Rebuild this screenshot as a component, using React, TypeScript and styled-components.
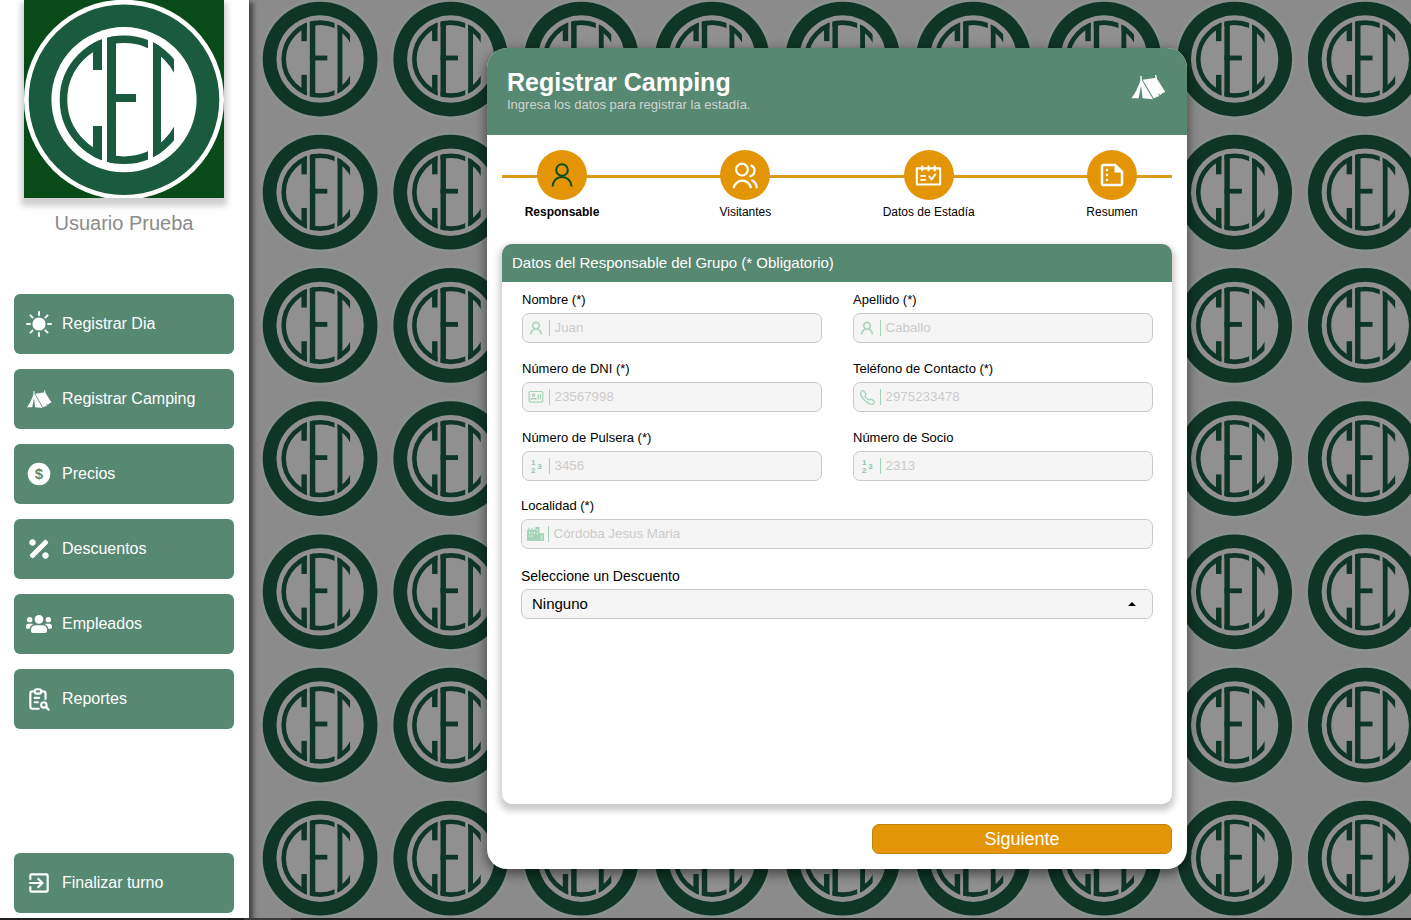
import React from "react";
import styled, { createGlobalStyle, css } from "styled-components";
import { AiOutlineSchedule, AiOutlineUser } from "react-icons/ai";
import { FaPercentage } from "react-icons/fa";
import { TbReportSearch } from "react-icons/tb";
import { MdExitToApp, MdOutlineSummarize } from "react-icons/md";
import { BsTelephone } from "react-icons/bs";

const green = "#578872";
const orange = "#e39506";

const GlobalStyle = createGlobalStyle`
  * { box-sizing: border-box; }
  body {
    margin: 0;
    overflow: hidden;
    background: #1f1f20;
    font-family: "Liberation Sans", Arial, sans-serif;
  }
`;

const Page = styled.div`
  display: flex;
  width: 1411px;
  height: 918px;
  position: relative;
  overflow: hidden;
  background: #8b8b8b;
`;

const BottomEdge = styled.div`
  height: 2px;
  background: linear-gradient(#3b3b3c, #3b3b3c) 244px 0 / 47px 2px no-repeat #1f1f20;
`;

const Backdrop = styled.svg`
  position: absolute;
  inset: 0;
  width: 100%;
  height: 100%;
`;

const Sidebar = styled.aside`
  position: relative;
  width: 249px;
  height: 100%;
  flex: none;
  display: flex;
  flex-direction: column;
  align-items: center;
  padding-bottom: 5px;
  background: #fff;
  box-shadow: 3px 3px 5px 1px rgba(0, 0, 0, 0.55);
`;

const LogoFrame = styled.div`
  width: 200px;
  height: 198px;
  margin-right: 1px;
  background: #084b18;
  box-shadow: 0 5px 6px 3px rgba(0, 0, 0, 0.19);
  svg { display: block; }
`;

const UserName = styled.div`
  margin: 14px 1px 0 0;
  height: 82px;
  font-size: 20px;
  line-height: 23px;
  color: #8b8b8b;
`;

const Menu = styled.nav`
  display: flex;
  flex-direction: column;
  gap: 15px;
  margin-right: 1px;
  flex: 1;
`;

const MenuButton = styled.button<{ $last?: boolean }>`
  display: flex;
  align-items: center;
  gap: 10px;
  width: 220px;
  height: 60px;
  padding: 0 12px;
  border: 0;
  border-radius: 6px;
  background: ${green};
  color: #fff;
  font: 16px/18px "Liberation Sans", Arial, sans-serif;
  text-align: left;
  margin-top: ${(p) => (p.$last ? "auto" : "0")};
  svg { width: 26px; height: 26px; flex: none; }
`;

const Main = styled.main`
  position: relative;
  flex: 1;
  display: flex;
  justify-content: center;
  align-items: flex-start;
  padding: 48px 0 0 14px;
`;

const Panel = styled.section`
  width: 700px;
  height: 821px;
  border-radius: 20px;
  background: #fff;
  box-shadow: 0 4px 12px 1px rgba(0, 0, 0, 0.5);
`;

const PanelHeader = styled.header`
  display: flex;
  justify-content: space-between;
  height: 87px;
  padding: 20px 20px 0;
  border-radius: 20px 20px 0 0;
  background: ${green};
  color: #fff;
  svg { width: 36px; height: 28px; margin: 5px 1px 0 0; }
`;

const Title = styled.h1`
  margin: 0;
  font-size: 25px;
  line-height: 29px;
`;

const Subtitle = styled.p`
  margin: 0;
  font-size: 13px;
  line-height: 15px;
  color: #d0d3d1;
`;

const Steps = styled.ol`
  list-style: none;
  margin: 15px 15px 0;
  padding: 0;
  height: 94px;
  display: flex;
  justify-content: space-between;
  background: linear-gradient(#dc991c, #dc991c) 0 25px / 100% 3px no-repeat;
`;

const Step = styled.li<{ $active?: boolean }>`
  display: flex;
  flex-direction: column;
  align-items: center;
  gap: 5px;
  width: 120px;
  font-size: 12px;
  line-height: 14px;
  font-weight: ${(p) => (p.$active ? 700 : 400)};
  color: #000;
`;

const StepDot = styled.span<{ $active?: boolean }>`
  display: flex;
  align-items: center;
  justify-content: center;
  width: 50px;
  height: 50px;
  border-radius: 50%;
  background: ${orange};
  color: ${(p) => (p.$active ? "#084b18" : "#fff")};
`;

const Card = styled.section`
  height: 560px;
  margin: 0 15px;
  border-radius: 10px;
  background: #fff;
  box-shadow: 0 4px 6px 3px rgba(0, 0, 0, 0.2);
`;

const CardHeader = styled.h2`
  margin: 0;
  height: 38px;
  padding: 0 10px;
  border-radius: 10px 10px 0 0;
  background: ${green};
  color: #fff;
  font-size: 15px;
  font-weight: 400;
  line-height: 38px;
`;

const FieldGrid = styled.div`
  display: grid;
  grid-template-columns: 300px 300px;
  column-gap: 31px;
  row-gap: 18px;
  padding: 10px 20px 0;
`;

const WideField = styled.div<{ $top: number }>`
  padding: ${(p) => p.$top}px 19px 0;
`;

const Label = styled.label<{ $large?: boolean }>`
  display: block;
  height: 21px;
  font-size: ${(p) => (p.$large ? 14 : 13)}px;
  line-height: 16px;
  color: #000;
`;

const box = css`
  display: flex;
  align-items: center;
  height: 30px;
  border: 1px solid #c9c9c9;
  border-radius: 7px;
  background: #f5f5f5;
`;

const InputBox = styled.div`
  ${box}
  padding-left: 4px;
`;

const IconSlot = styled.span`
  display: flex;
  align-items: center;
  justify-content: center;
  width: 18px;
  height: 18px;
  color: #a5d3b8;
`;

const Divider = styled.span`
  width: 1px;
  height: 16px;
  margin: 0 4px;
  background: #a5d3b8;
`;

const Placeholder = styled.span`
  font-size: 13.333px;
  line-height: 15px;
  margin-top: -2px;
  padding-left: 0.5px;
  color: #cbcbcb;
`;

const SelectBox = styled.div`
  ${box}
  justify-content: space-between;
  padding: 0 16px 1px 10px;
  font-size: 15px;
  color: #000;
`;

const Actions = styled.div`
  display: flex;
  justify-content: flex-end;
  padding: 20px 15px 0;
`;

const NextButton = styled.button`
  width: 300px;
  height: 30px;
  padding: 0;
  border: 1px solid #c28212;
  border-radius: 7px;
  background: ${orange};
  color: #fff;
  font: 18px/26px "Liberation Sans", Arial, sans-serif;
`;

const Glyph = styled.text<{ $size: number }>`
  font: 700 ${(p) => p.$size}px "Liberation Sans", Arial, sans-serif;
  text-anchor: middle;
`;

function SunIcon() {
  return (
    <svg viewBox="0 0 26 26">
      <circle cx="13" cy="13" r="6.6" fill="currentColor" />
      <g stroke="currentColor" strokeWidth="1.9">
        {[0, 45, 90, 135, 180, 225, 270, 315].map((a) => (
          <path key={a} d="M13 .2v4.5" transform={`rotate(${a} 13 13)`} />
        ))}
      </g>
    </svg>
  );
}

function TentIcon() {
  return (
    <svg viewBox="0 0 108 84" fill="currentColor">
      <path d="M31 9h4v12h-4zM75 6h4l2 12h-4z" />
      <path d="M33 17 C26 40 16 60 4 76h22l7-38 5 38 31 3z" />
      <path d="M38 20 79 14 106 57l-8 3-7 6-7-6 4 9-17 7z" />
    </svg>
  );
}

function DollarIcon() {
  return (
    <svg viewBox="0 0 26 26">
      <circle cx="13" cy="13" r="11.3" fill="currentColor" />
      <Glyph $size={15} x="13" y="18.1" fill={green}>$</Glyph>
    </svg>
  );
}

function TeamIcon() {
  const side = "M8 28h10c3 0 3 2 1 3c-5 3-7 7-8 12H4c-3 0-4-1-4-4v-3c0-5 3-8 8-8z";
  return (
    <svg viewBox="0 -10 78 78" fill="currentColor">
      <circle cx="39" cy="15" r="13" />
      <circle cx="11" cy="16" r="8" />
      <circle cx="67" cy="16" r="8" />
      <path d={side} />
      <path d={side} transform="matrix(-1 0 0 1 78 0)" />
      <path d="M29 33h20c9 0 14 6 14 13v4c0 4-2 6-6 6H21c-4 0-6-2-6-6v-4c0-7 5-13 14-13z" />
    </svg>
  );
}

function PersonIcon() {
  return (
    <svg width="22" height="24" viewBox="0 0 22 24" fill="none" stroke="currentColor" strokeWidth="2">
      <circle cx="11" cy="7" r="5.8" />
      <path d="M1.5 23.5a9.5 9.5 0 0 1 19 0" />
    </svg>
  );
}

function PeopleIcon() {
  return (
    <svg width="26" height="27" viewBox="0 0 26 27" fill="none" stroke="currentColor" strokeWidth="2.2">
      <circle cx="10" cy="7.6" r="5.9" />
      <path d="M1.6 26.2a8.8 8.8 0 0 1 17.4 0M18.6 3.4a5.6 5.6 0 0 1-1.2 10.9M19.4 18a9 9 0 0 1 5.3 8.2" />
    </svg>
  );
}

function NumbersIcon() {
  return (
    <svg width="18" height="18" viewBox="0 0 18 18" fill="#93c8aa">
      <Glyph $size={8} x="6.2" y="8.2">1</Glyph>
      <Glyph $size={8} x="6.2" y="15.6">2</Glyph>
      <Glyph $size={8} x="12.4" y="12">3</Glyph>
    </svg>
  );
}

function IdCardIcon() {
  return (
    <svg width="16" height="14" viewBox="0 0 16 14" fill="none" stroke="currentColor" strokeWidth="1.2">
      <rect x="1.2" y="1.5" width="13.6" height="10.6" rx="1" />
      <circle cx="5.5" cy="5" r="1.2" />
      <path d="M3.2 10V8.7h4.6V10M10.2 4.2v5.4M12.4 4.2v5.4" />
    </svg>
  );
}

function CityIcon() {
  return (
    <svg width="17" height="14" viewBox="0 0 49 40" fill="currentColor">
      <path d="M4 2h3v6h6V2h3v6h8V0h12v18h11q2 0 2 2v18q0 2-2 2H2q-2 0-2-2V10q0-2 2-2h2z" />
      <path d="M6 14h3v5H6zM13 14h3v5h-3zM20 14h3v5h-3zM6 24h3v4H6zM13 24h3v4h-3zM28 6h3v5h-3zM28 16h3v5h-3zM40 24h4v4h-4zM40 31h4v4h-4z" fill="#f5f5f5" />
    </svg>
  );
}

/* Club crest: an outer ring and a monogram built from ring segments and bars. */
function Crest({ id, ink, paper, rim }: { id: string; ink: string; paper: string; rim: string }) {
  return (
    <g>
      <defs>
        <clipPath id={`${id}-disc`}><circle cx="100" cy="99.7" r="64.3" /></clipPath>
        <clipPath id={`${id}-cols`}>
          <rect x="30" y="30" width="48" height="140" />
          <rect x="83" y="30" width="41" height="140" />
          <rect x="129" y="30" width="21" height="140" />
        </clipPath>
      </defs>
      <circle cx="100" cy="99.7" r="100" fill={rim} />
      <circle cx="100" cy="99.7" r="95.3" fill={ink} />
      <circle cx="100" cy="99.7" r="72.6" fill={paper} />
      <circle cx="100" cy="99.7" r="60.5" fill="none" stroke={ink} strokeWidth="7.6" clipPath={`url(#${id}-cols)`} />
      <g fill={ink} clipPath={`url(#${id}-disc)`}>
        <rect x="69" y="30" width="9" height="40" />
        <rect x="69" y="126" width="9" height="44" />
        <rect x="83" y="30" width="9" height="140" />
        <rect x="83" y="94" width="29" height="8" />
        <rect x="129" y="30" width="8" height="140" />
      </g>
    </g>
  );
}

function CrestPattern() {
  const cells: React.ReactNode[] = [];
  for (let row = 0; row < 7; row++) {
    for (let col = 0; col < 9; col++) {
      cells.push(
        <use
          key={`${row}-${col}`}
          href="#tile-crest"
          transform={`translate(${259.9 + col * 130.65} ${-1 + row * 133.2}) scale(0.602)`}
        />
      );
    }
  }
  return (
    <Backdrop aria-hidden>
      <defs>
        <g id="tile-crest">
          <Crest id="tile" ink="#0f3526" paper="#909090" rim="#8b918e" />
        </g>
      </defs>
      {cells}
    </Backdrop>
  );
}

const MenuText = styled.span`
  margin-bottom: 1px;
`;

const menu = [
  { text: "Registrar Dia", icon: <SunIcon /> },
  { text: "Registrar Camping", icon: <TentIcon /> },
  { text: "Precios", icon: <DollarIcon /> },
  { text: "Descuentos", icon: <FaPercentage /> },
  { text: "Empleados", icon: <TeamIcon /> },
  { text: "Reportes", icon: <TbReportSearch /> },
];

const steps = [
  { text: "Responsable", icon: <PersonIcon />, active: true },
  { text: "Visitantes", icon: <PeopleIcon /> },
  { text: "Datos de Estadía", icon: <AiOutlineSchedule size={29} /> },
  { text: "Resumen", icon: <MdOutlineSummarize size={30} /> },
];

const userIcon = <AiOutlineUser size={16} stroke="currentColor" strokeWidth={20} />;

const fields = [
  { label: "Nombre (*)", hint: "Juan", icon: userIcon },
  { label: "Apellido (*)", hint: "Caballo", icon: userIcon },
  { label: "Número de DNI (*)", hint: "23567998", icon: <IdCardIcon /> },
  { label: "Teléfono de Contacto (*)", hint: "2975233478", icon: <BsTelephone size={15} stroke="currentColor" strokeWidth={0.4} /> },
  { label: "Número de Pulsera (*)", hint: "3456", icon: <NumbersIcon /> },
  { label: "Número de Socio", hint: "2313", icon: <NumbersIcon /> },
];

function Field({ label, hint, icon }: { label: string; hint: string; icon: React.ReactNode }) {
  return (
    <div>
      <Label>{label}</Label>
      <InputBox>
        <IconSlot>{icon}</IconSlot>
        <Divider />
        <Placeholder>{hint}</Placeholder>
      </InputBox>
    </div>
  );
}

export default function App() {
  return (
    <>
      <GlobalStyle />
      <Page>
        <CrestPattern />
        <Sidebar>
          <LogoFrame>
            <svg width="200" height="198" viewBox="0 0 200 198">
              <Crest id="logo" ink="#1a5a3e" paper="#fff" rim="#fff" />
            </svg>
          </LogoFrame>
          <UserName>Usuario Prueba</UserName>
          <Menu>
            {menu.map((m) => (
              <MenuButton key={m.text}>{m.icon}<MenuText>{m.text}</MenuText></MenuButton>
            ))}
            <MenuButton $last><MdExitToApp /><MenuText>Finalizar turno</MenuText></MenuButton>
          </Menu>
        </Sidebar>
        <Main>
          <Panel>
            <PanelHeader>
              <div>
                <Title>Registrar Camping</Title>
                <Subtitle>Ingresa los datos para registrar la estadía.</Subtitle>
              </div>
              <TentIcon />
            </PanelHeader>
            <Steps>
              {steps.map((s) => (
                <Step key={s.text} $active={s.active}>
                  <StepDot $active={s.active}>{s.icon}</StepDot>
                  {s.text}
                </Step>
              ))}
            </Steps>
            <Card>
              <CardHeader>Datos del Responsable del Grupo (* Obligatorio)</CardHeader>
              <FieldGrid>
                {fields.map((f) => <Field key={f.label} {...f} />)}
              </FieldGrid>
              <WideField $top={17}>
                <Field label="Localidad (*)" hint="Córdoba Jesus Maria" icon={<CityIcon />} />
              </WideField>
              <WideField $top={19}>
                <Label $large>Seleccione un Descuento</Label>
                <SelectBox>
                  Ninguno
                  <svg width="8" height="4" viewBox="0 0 8 4"><path d="M0 4 4 0 8 4Z" /></svg>
                </SelectBox>
              </WideField>
            </Card>
            <Actions><NextButton>Siguiente</NextButton></Actions>
          </Panel>
        </Main>
      </Page>
      <BottomEdge />
    </>
  );
}
